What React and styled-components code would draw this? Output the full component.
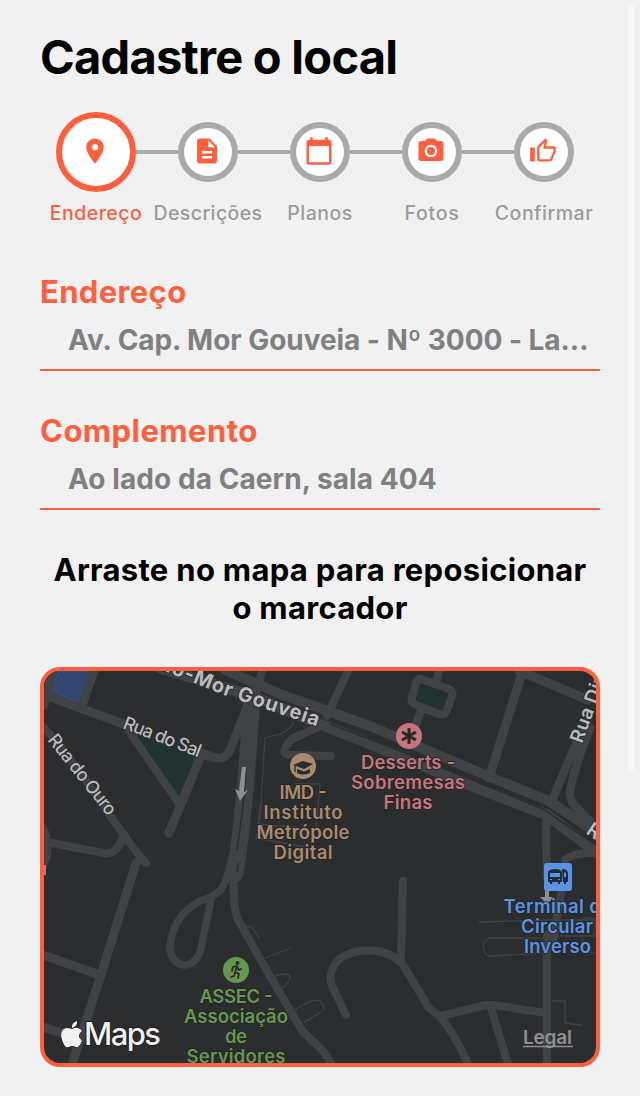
import React from "react";
import styled, { createGlobalStyle } from "styled-components";
import { MdLocationOn, MdDescription, MdCalendarToday, MdPhotoCamera } from "react-icons/md";

const accent = "#ff5f3f";

const GlobalStyle = createGlobalStyle`
  *, *::before, *::after { box-sizing: border-box; }
  body {
    margin: 0;
    background: #f1f1f1;
    font-family: Inter, "Liberation Sans", sans-serif;
  }
`;

const Screen = styled.main`
  position: relative;
  height: 1096px;
  padding: 28px 40px 0;
  overflow: hidden;
`;

const ScrollThumb = styled.div`
  position: absolute;
  top: 5px;
  right: 6px;
  width: 6px;
  height: 766px;
  border-radius: 3px;
  background: #f9f9f9;
`;

const Title = styled.h1`
  margin: 0;
  height: 84px;
  font-size: 47px;
  font-weight: 700;
  line-height: 58px;
  letter-spacing: ${(p) => p.$spacing}px;
  white-space: nowrap;
  color: #000;
`;

const Stepper = styled.ol`
  display: grid;
  grid-template-columns: repeat(5, 112px);
  margin: 0;
  padding: 0;
  height: 161px;
  list-style: none;
`;

const Step = styled.li`
  display: flex;
  flex-direction: column;
  align-items: center;
`;

const Track = styled.div`
  display: flex;
  align-items: center;
  width: 100%;
  height: 80px;
`;

const Connector = styled.span`
  flex: 1;
  height: 4px;
  background: ${(p) => (p.$hidden ? "transparent" : "#aaaaaa")};
`;

const Bubble = styled.span`
  display: flex;
  align-items: center;
  justify-content: center;
  width: ${(p) => (p.$active ? 80 : 60)}px;
  height: ${(p) => (p.$active ? 80 : 60)}px;
  padding: 0 2px 2px 0;
  border: 6px solid ${(p) => (p.$active ? accent : "#aaaaaa")};
  border-radius: 50%;
  background: #fff;
  color: ${accent};

  svg { flex: none; }
`;

const StepLabel = styled.span`
  margin-top: 9px;
  font-size: 19.5px;
  font-weight: 500;
  line-height: 24px;
  letter-spacing: ${(p) => p.$spacing}px;
  color: ${(p) => (p.$active ? accent : "#9b9b9b")};
`;

const Field = styled.label`
  display: flex;
  flex-direction: column;
  height: ${(p) => p.$height}px;
`;

const FieldLabel = styled.span`
  font-size: 31px;
  font-weight: 700;
  line-height: 38px;
  letter-spacing: ${(p) => p.$spacing}px;
  color: ${accent};
`;

const FieldValue = styled.span`
  height: 60px;
  padding: 12px 0 0 28px;
  border-bottom: 2px solid ${accent};
  font-size: 28px;
  font-weight: 700;
  line-height: 34px;
  letter-spacing: ${(p) => p.$spacing}px;
  white-space: nowrap;
  color: #808080;
`;

const Hint = styled.h2`
  margin: 0;
  height: 116px;
  font-size: 31px;
  font-weight: 700;
  line-height: 38px;
  letter-spacing: 0.3px;
  text-align: center;
  white-space: nowrap;
  color: #000;
`;

const MapFrame = styled.section`
  height: 400px;
  border: 4px solid ${accent};
  border-radius: 20px;
  overflow: hidden;
  background: #2c2d2f;

  svg { display: block; }
`;

const Roads = styled.g`
  fill: none;
  stroke: #3f4346;
  stroke-linecap: round;
  stroke-linejoin: round;
`;

const PlaceText = styled.text`
  font-size: 18.5px;
  font-weight: 600;
  text-anchor: middle;
  paint-order: stroke;
  stroke: #242526;
  stroke-width: 1.5px;
  fill: ${(p) => p.$color};
`;

const StreetText = styled.text`
  font-size: ${(p) => p.$size}px;
  font-weight: ${(p) => p.$weight || 500};
  paint-order: stroke;
  stroke: #2c2d2f;
  stroke-width: 2px;
  fill: #b9bbbd;
`;

const BrandText = styled.text`
  font-size: 31px;
  font-weight: 500;
  paint-order: stroke;
  stroke: #1b1c1d;
  stroke-width: 2px;
  fill: #f0f0f0;
`;

const LegalText = styled.text`
  font-size: 19px;
  font-weight: 600;
  fill: #8f9092;
`;

const ThumbIcon = () => (
  <svg width="28" height="28" viewBox="0 0 24 24" fill="currentColor">
    <path d="M5,9V21H1V9H5M9,21A2,2 0 0,1 7,19V9C7,8.45 7.22,7.95 7.59,7.59L14.17,1L15.23,2.06C15.5,2.33 15.67,2.7 15.67,3.11L15.64,3.43L14.69,8H21C22.11,8 23,8.9 23,10V12C23,12.26 22.95,12.5 22.86,12.73L19.84,19.78C19.54,20.5 18.83,21 18,21H9M9,19H18.03L21,12V10H12.21L13.34,4.68L9,9.03V19Z" />
  </svg>
);

const steps = [
  { label: "Endereço", icon: <MdLocationOn size={30} />, spacing: 0.5 },
  { label: "Descrições", icon: <MdDescription size={30} />, spacing: 0.4 },
  { label: "Planos", icon: <MdCalendarToday size={30} />, spacing: 0.5 },
  { label: "Fotos", icon: <MdPhotoCamera size={30} />, spacing: 0.7 },
  { label: "Confirmar", icon: <ThumbIcon />, spacing: 0.5 },
];

const places = [
  {
    color: "#a98a6d",
    lines: [["IMD -", 303, 799, 47], ["Instituto", 303, 819, 79], ["Metrópole", 303, 839, 93], ["Digital", 303, 859, 59]],
  },
  {
    color: "#c5757b",
    lines: [["Desserts -", 408, 769, 94], ["Sobremesas", 408, 789, 114], ["Finas", 408, 809, 49]],
  },
  {
    color: "#669650",
    lines: [["ASSEC -", 236, 1003, 73], ["Associação", 236, 1023, 104], ["de", 236, 1043, 22], ["Servidores", 236, 1063, 99]],
  },
  {
    color: "#5b93e4",
    lines: [["Terminal do", 558, 913, 109], ["Circular", 557, 933, 72], ["Inverso", 557.5, 953, 67]],
  },
];

function CityMap() {
  return (
    <svg width="552" height="392" viewBox="44 671 552 392">
      <path d="M44 671h12l-4 20-8 3z" fill="#203230" />
      <path d="M58 671H90L78 702 52 692z" fill="#334570" stroke="#3c5389" />
      <path d="M138 735L197 756 180 805z" fill="#213230" />
      <path d="M411 680l37 13-6 18-34-12z" fill="#213230" />

      <Roads strokeWidth="9">
        <path d="M95 668L82 705M44 705L52 672" />
        <path d="M42 694L126 725M196 751l16 6q13 4 18-7l22-55M200 758L169 833" />
        <path d="M126 727L180 805" strokeWidth="8" />
        <path d="M38 722Q62 745 98 798T146 863" strokeWidth="8" />
        <path d="M124 834q-6 21-20 19Q75 848 48 842M37 820q13 13 10 35l-7 18" strokeWidth="8" />
        <path d="M136 863L101 975 71 1067M40 954L100 975M40 1026L65 1034" strokeWidth="9" />
        <path d="M262 671L257 690M348 671L327 716M318 727l-26 12q-16 17 1 16l38 1" strokeWidth="8" />
        <path d="M421 679l28 10q5 2 3 7l-5 14q-2 6-8 4l-23-9q-6-3-4-8l4-14q2-5 5-4M439 671l-3 13M422 708L413 732" strokeWidth="8" />
        <path d="M523 670L489 778M518 670L588 700" strokeWidth="9" />
        <path d="M546 817L547 877M565 860Q573 852 598 853" strokeWidth="8" />
        <path d="M403 881L401 958M346 1015L333 988Q326 974 339 959Q356 948 378 951Q392 954 402 963L429 1008 440 1017Q455 1034 468 1064M441 1016L482 1006Q490 1004 500 1006L546 1013M491 1008L508 1064" strokeWidth="8" />
        <path d="M547 935V1064" strokeWidth="8" />
        <path d="M234 849Q227 883 220 891Q211 898 200 901Q172 916 170 948Q172 966 187 965Q198 962 201 948L211 900" strokeWidth="7.5" />
      </Roads>
      <Roads strokeWidth="11">
        <path d="M160 668L253 696 300 716 390 752 454 779 547 815 600 855" />
        <path d="M225 670L280 694 370 726 490 777 549 801 602 836" strokeWidth="10" />
        <path d="M252 696L246 780Q241 835 235 874" strokeWidth="17" />
        <path d="M234 865Q232 898 237 918L271 978 303 1032 321 1049Q328 1056 332 1066" strokeWidth="8" />
        <path d="M582 730L553 798M590 728Q571 777 570 794Q570 802 579 810L603 834" strokeWidth="8.5" />
        <path d="M562 887L553 941" strokeWidth="8" />
      </Roads>
      <g fill="none" stroke="#2c2d2f" strokeWidth="1.2">
        <path d="M330 724L390 747 455 773 543 809 599 847" strokeWidth="1.6" />
        <path d="M246 770Q244 805 237 850M238 863l-1 9" strokeWidth="1.6" />
      </g>
      <Roads strokeWidth="1.3">
        <path d="M294 722q-8 13-19 13l-10 3-5 81M295 784h25l-4 43M260 806l-3 32M258 824l42 4M256 838l50 9M320 786" />
        <path d="M243 926q11-1 16 12M262 959l29-11M273 977q14-6 17 0q1 4-9 12M292 1011l19-10q12-3 13 8q0 2-20 13" />
        <path d="M479 922L550 920H595M545 938h-55q-7 3-7 9q1 9 8 9l57-3M548 936h47v-15M583 918h15M553 1001h12v22l16 2M582 920v30l18 5" />
      </Roads>

      <g fill="#8b8f92">
        <path d="M242 767h4l-2 25 4-2-8 11-5-12 4 2z" />
        <path d="M545 883h4v14l5 0-7 7-7-7 5 0z" />
      </g>

      <circle cx="303" cy="766" r="13" fill="#a98a6d" />
      <path d="M293 765l10-4 10 3-9 5z M297 769l7 2.5 6-2.5v4q-7 3-13 0z" fill="#292a2b" />
      <path d="M295 766v6" stroke="#292a2b" strokeWidth="1.3" />

      <circle cx="409" cy="736" r="13" fill="#c5757b" />
      <path d="M409 728v16M402 732l14 8M402 740l14-8" stroke="#292a2b" strokeWidth="3" />

      <circle cx="236" cy="970" r="13" fill="#669650" />
      <circle cx="237.5" cy="963" r="2" fill="#292a2b" />
      <path d="M237 966l-4 1-1 4M237 967l-2 5 4 2-1 4M235 972l-1 4-3 1M237 967l2 3 2-1" fill="none" stroke="#292a2b" strokeWidth="1.8" strokeLinecap="round" />

      <rect x="544" y="863" width="28" height="28" rx="3" fill="#5b93e4" />
      <path d="M548 873q0-4 7-4t7 4v9h-2v2h-2v-2h-6v2h-2v-2h-2z M562 869q6 0 6 5v8h-2v2h-2v-2h-1z" fill="#242b38" />
      <path d="M550 873h10v4h-10z M564 872l2 1v4h-2z M550 879h2v1h-2z M558 879h2v1h-2z" fill="#5b93e4" />

      <path id="avenue" d="M159 669L224 695Q280 714 319 727" fill="none" />
      <StreetText $size={20} $weight={700}>
        <textPath href="#avenue" textLength="168" lengthAdjust="spacing">ão-Mor Gouveia</textPath>
      </StreetText>
      <StreetText $size={18} transform="translate(122 728) rotate(21)" textLength="82">Rua do Sal</StreetText>
      <StreetText $size={18} transform="translate(47 740) rotate(51.5)" textLength="98">Rua do Ouro</StreetText>
      <StreetText $size={19} $weight={600} transform="translate(582 744) rotate(-70)" textLength="84">Rua Diva</StreetText>
      <StreetText $size={20} $weight={600} transform="translate(585 833) rotate(34)">Rua</StreetText>
      <path d="M44 865h2v10h-2z" fill="#c5757b" />

      {places.map((place) =>
        place.lines.map(([line, x, y, width]) => (
          <PlaceText key={line} $color={place.color} x={x} y={y} textLength={width}>{line}</PlaceText>
        ))
      )}

      <g transform="translate(61 1021)" fill="#f0f0f0" stroke="#1b1c1d" strokeWidth="1" paintOrder="stroke">
        <path d="M16 0q1 5-5 7q-1-5 5-7z" />
        <path d="M11 8q4-2 6-1q3 1 4 3q-6 4 0 10q-3 7-6 6q-4-2-7 0q-4 2-7-7q-3-10 4-12q3 0 6 1z" />
      </g>
      <BrandText x="84" y="1045" textLength="77">Maps</BrandText>
      <LegalText x="523" y="1044" textLength="49">Legal</LegalText>
      <path d="M523 1046.5h50" stroke="#8f9092" strokeWidth="1.5" />
    </svg>
  );
}

export default function App() {
  return (
    <Screen>
      <GlobalStyle />
      <Title $spacing={-0.75}>Cadastre o local</Title>
      <Stepper>
        {steps.map((step, i) => (
          <Step key={step.label}>
            <Track>
              <Connector $hidden={i === 0} />
              <Bubble $active={i === 0}>{step.icon}</Bubble>
              <Connector $hidden={i === steps.length - 1} />
            </Track>
            <StepLabel $active={i === 0} $spacing={step.spacing}>{step.label}</StepLabel>
          </Step>
        ))}
      </Stepper>
      <Field $height={139}>
        <FieldLabel $spacing={0.35}>Endereço</FieldLabel>
        <FieldValue $spacing={-0.05}>Av. Cap. Mor Gouveia - Nº 3000 - La...</FieldValue>
      </Field>
      <Field $height={139}>
        <FieldLabel $spacing={0.45}>Complemento</FieldLabel>
        <FieldValue $spacing={0.07}>Ao lado da Caern, sala 404</FieldValue>
      </Field>
      <Hint>
        Arraste no mapa para reposicionar
        <br />o marcador
      </Hint>
      <MapFrame>
        <CityMap />
      </MapFrame>
      <ScrollThumb />
    </Screen>
  );
}
